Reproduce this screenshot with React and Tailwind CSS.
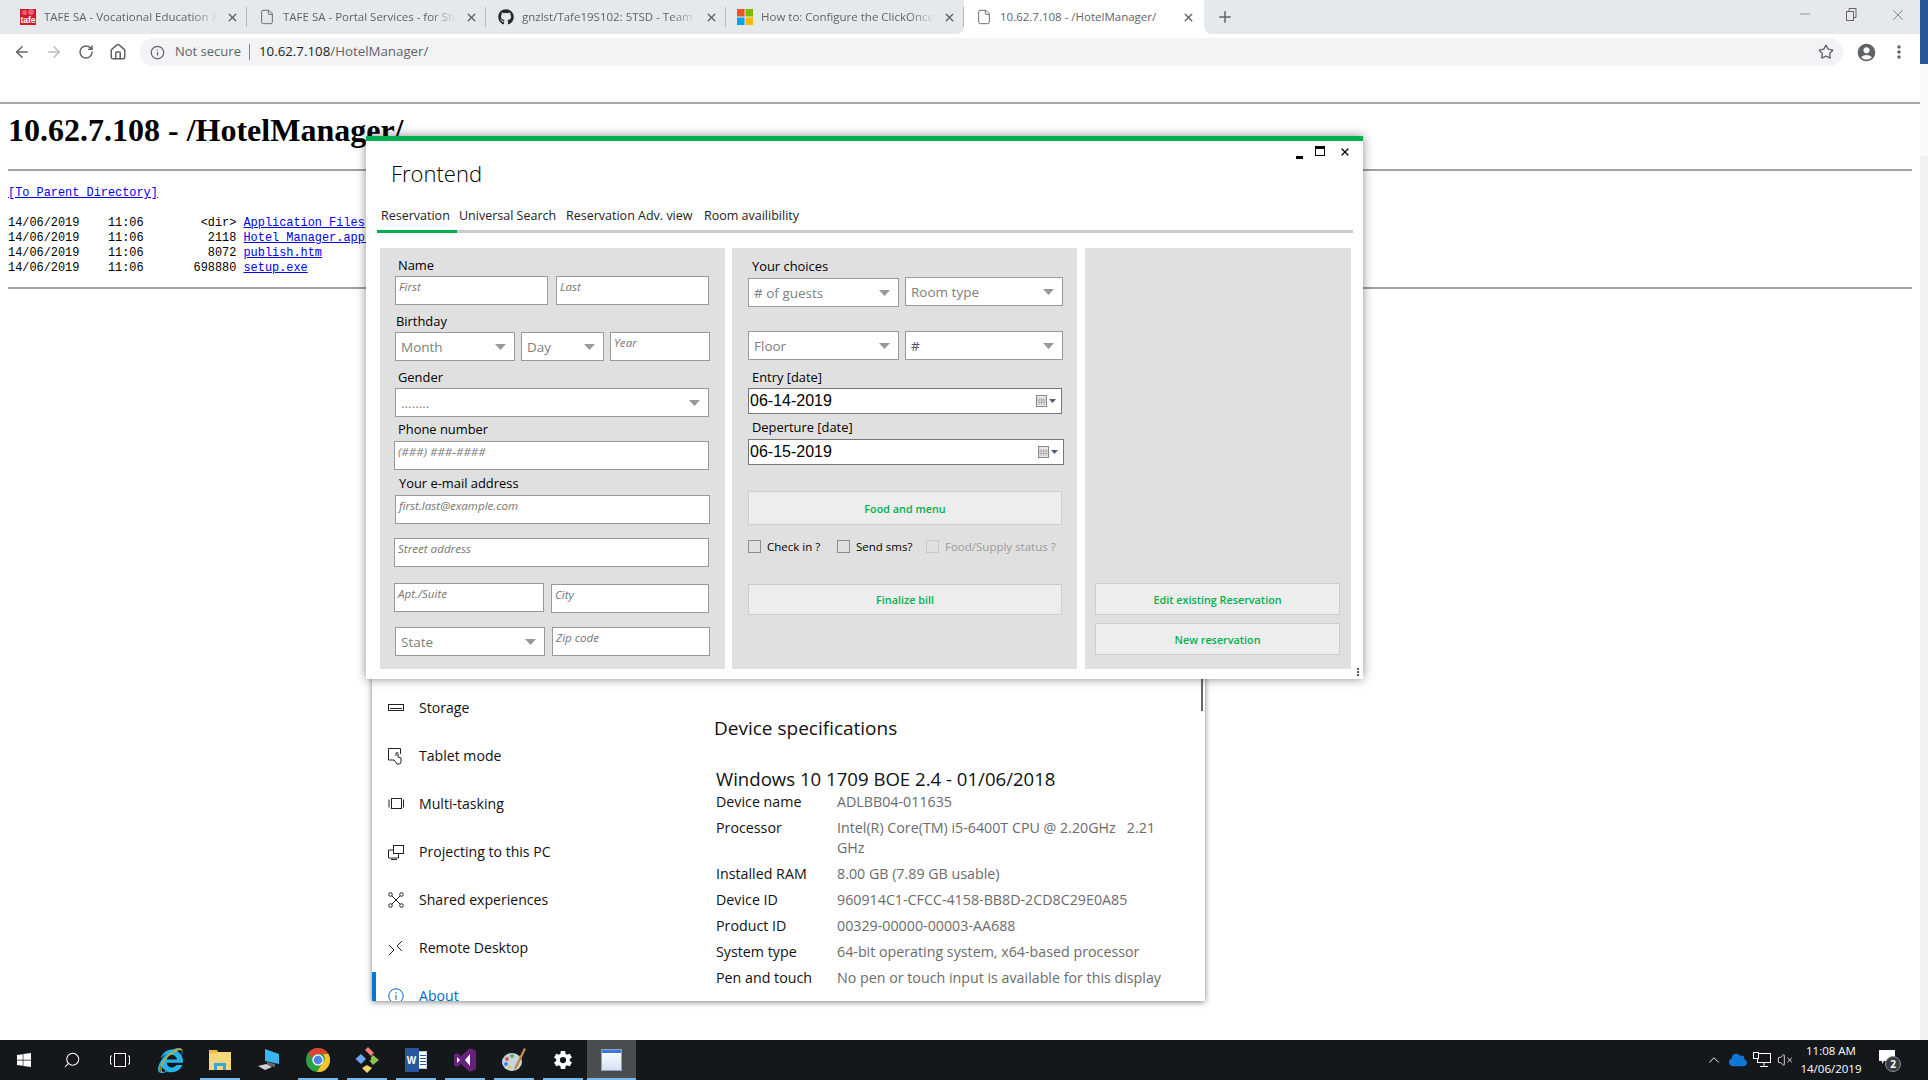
import React from "react";
import {
  ArrowLeft,
  ArrowRight,
  RotateCw,
  Home,
  Info,
  Star,
  X,
  Plus,
  Minus,
  File,
  Search,
  ChevronUp,
  VolumeX,
} from "lucide-react";
import { FaGithub, FaWindows, FaCloud, FaInternetExplorer } from "react-icons/fa";
import { IoSettingsSharp } from "react-icons/io5";
import { MdAccountCircle, MdMoreVert } from "react-icons/md";

const SEGOE = "font-['Open_Sans',sans-serif]";

const TafeIcon = () => (
  <div className="relative w-4 h-4 bg-[#d3182c] flex items-end justify-center overflow-hidden">
    <div className="absolute left-[2px] top-[1px] w-[5px] h-[5px] rounded-full bg-[#e8606e]" />
    <div className="absolute right-[2px] top-0 w-[6px] h-[6px] rounded-full bg-[#e8606e]" />
    <span className="relative text-white text-[8.5px] font-bold leading-[9px] font-['Liberation_Sans',sans-serif]">tafe</span>
  </div>
);

const MsIcon = () => (
  <svg width="16" height="16" viewBox="0 0 16 16">
    <rect width="7.5" height="7.5" fill="#f25022" />
    <rect x="8.5" width="7.5" height="7.5" fill="#7fba00" />
    <rect y="8.5" width="7.5" height="7.5" fill="#00a4ef" />
    <rect x="8.5" y="8.5" width="7.5" height="7.5" fill="#ffb900" />
  </svg>
);

const tabs = [
  { title: "TAFE SA - Vocational Education & Training", icon: <TafeIcon />, width: "w-[247px] pl-5" },
  { title: "TAFE SA - Portal Services - for Students", icon: <File size={16} strokeWidth={1.4} color="#5f6368" />, width: "w-[239px] pl-3" },
  { title: "gnzlst/Tafe19S102: 5TSD - Team Project", icon: <FaGithub size={16} color="#24292e" />, width: "w-[240px] pl-3" },
  { title: "How to: Configure the ClickOnce Trust", icon: <MsIcon />, width: "w-[238px] pl-[11px]" },
];

const Tab = ({ title, icon, width }) => (
  <div className={`${width} h-5 my-[7px] pr-[7px] flex items-center gap-2 border-r border-[#b5b9bd]`}>
    <div className="shrink-0">{icon}</div>
    <div className="flex-1 min-w-0 overflow-hidden whitespace-nowrap text-[11.5px] text-[#5f6368] [mask-image:linear-gradient(to_right,black_85%,transparent)]">
      {title}
    </div>
    <X size={13} strokeWidth={2.6} color="#5f6368" className="shrink-0" />
  </div>
);

const TabStrip = () => (
  <div className={`h-[34px] flex bg-white ${SEGOE}`}>
    <div className="w-[964px] h-full bg-[#e6e9ec] rounded-br-lg flex">
      {tabs.map((t) => (
        <Tab key={t.title} {...t} />
      ))}
    </div>
    <div className="w-[240px] h-full bg-white rounded-t-lg pl-3 pr-[9px] flex items-center gap-2">
      <File size={16} strokeWidth={1.4} color="#5f6368" className="shrink-0" />
      <div className="flex-1 whitespace-nowrap text-[11.5px] text-[#5f6368]">10.62.7.108 - /HotelManager/</div>
      <X size={13} strokeWidth={2.6} color="#5f6368" className="shrink-0" />
    </div>
    <div className="flex-1 h-full bg-[#e6e9ec] rounded-bl-lg flex items-center pl-3">
      <Plus size={18} strokeWidth={2} color="#5f6368" />
      <div className="flex-1" />
      <div className="flex items-start h-full pt-[6px] gap-[30px] pr-[13px] text-[#666]">
        <Minus size={16} strokeWidth={1} />
        <svg width="16" height="16" viewBox="0 0 16 16" fill="none" stroke="currentColor">
          <rect x="3.5" y="5.5" width="7" height="9" />
          <path d="M6 5V2.5h7v9h-2.5" />
        </svg>
        <X size={18} strokeWidth={1} />
      </div>
    </div>
  </div>
);

const Toolbar = () => (
  <div className={`h-8 flex items-start pt-1 pl-[6px] ${SEGOE}`}>
    <div className="w-8 h-7 flex items-center justify-center"><ArrowLeft size={18} color="#5f6368" strokeWidth={2} /></div>
    <div className="w-8 h-7 flex items-center justify-center"><ArrowRight size={18} color="#b9bcc0" strokeWidth={2} /></div>
    <div className="w-8 h-7 flex items-center justify-center"><RotateCw size={16} color="#5f6368" strokeWidth={2.2} /></div>
    <div className="w-8 h-7 flex items-center justify-center"><Home size={18} color="#5f6368" strokeWidth={2} /></div>
    <div className="ml-[6px] w-[1703px] h-7 rounded-full bg-[#f1f3f4] flex items-center pl-[10px] pr-[9px]">
      <Info size={15} color="#5f6368" strokeWidth={2} />
      <span className="ml-[10px] text-[13px] text-[#5f6368]">Not secure</span>
      <div className="ml-2 w-px h-4 bg-[#80868b]" />
      <span className="ml-[9px] text-[13.3px] text-[#202124]">10.62.7.108<span className="text-[#5f6368]">/HotelManager/</span></span>
      <div className="flex-1" />
      <Star size={16} color="#5f6368" strokeWidth={2} />
    </div>
    <div className="ml-[7px] w-8 h-7 flex items-center justify-center"><MdAccountCircle size={21} color="#5f6368" /></div>
    <div className="ml-px w-8 h-7 flex items-center justify-center"><MdMoreVert size={20} color="#5f6368" /></div>
  </div>
);

const files = [
  ["14/06/2019    11:06        <dir> ", "Application Files"],
  ["14/06/2019    11:06         2118 ", "Hotel_Manager.application"],
  ["14/06/2019    11:06         8072 ", "publish.htm"],
  ["14/06/2019    11:06       698880 ", "setup.exe"],
];

const Listing = () => (
  <div className="pt-9 font-['Liberation_Mono',monospace] text-[11.9px] text-black">
    <div className="h-0.5 bg-[#a8a8a8]" />
    <h1 className="mt-[8px] ml-2 h-9 text-[32px] leading-9 font-bold whitespace-nowrap font-['Liberation_Serif',serif]">
      10.62.7.108 - /HotelManager/
    </h1>
    <div className="mt-[21px] mx-2 h-0.5 bg-[#a0a0a0]" />
    <div className="mt-[15px] ml-2 leading-[15px] text-[#0000ee] underline">[To Parent Directory]</div>
    <pre className="mt-[15px] ml-2 leading-[15px] font-['Liberation_Mono',monospace]">
      {files.map(([meta, name]) => (
        <div key={name}>
          {meta}
          <span className="text-[#0000ee] underline">{name}</span>
        </div>
      ))}
    </pre>
    <div className="mt-[11px] mx-2 h-0.5 bg-[#a0a0a0]" />
  </div>
);

const Caret = () => (
  <svg width="11" height="6" viewBox="0 0 11 6" className="shrink-0">
    <path d="M0 0h11L5.5 6z" fill="#999" />
  </svg>
);

const Field = ({ className = "", text }) => (
  <div className={`h-[29px] border border-[#999] bg-white pl-[3px] text-[11.6px] leading-[20px] italic text-[#777] ${className}`}>
    {text}
  </div>
);

const Select = ({ className = "", text, dark }) => (
  <div className={`h-[29px] border border-[#999] bg-white pl-[5px] pr-2 flex items-center justify-between text-[13.5px] text-[#808080] ${className}`}>
    <span className={`pt-px ${dark ? "text-[#555]" : ""}`}>{text}</span>
    <Caret />
  </div>
);

const Label = ({ className = "", text }) => (
  <div className={`h-4 text-[12.9px] leading-[17px] text-black whitespace-nowrap ${className}`}>{text}</div>
);

const DateBox = ({ className = "", value }) => (
  <div className={`h-[26px] border border-[#777] bg-white pl-[1px] pr-1 flex items-center justify-between text-[16px] text-black font-['Liberation_Sans',sans-serif] ${className}`}>
    <span>{value}</span>
    <svg width="21" height="13" viewBox="0 0 21 13">
      <rect x="0.5" y="0.5" width="10" height="11" fill="#e8e8e8" stroke="#8a8a8a" />
      <path d="M3 3v7M5.5 3v7M8 3v7M1 5h9M1 7.5h9" stroke="#b0b0b0" />
      <path d="M13 4h7l-3.5 4z" fill="#4a5f80" />
    </svg>
  </div>
);

const GreenButton = ({ className = "", text }) => (
  <div className={`border border-[#cdcdcd] bg-[#ededed] pt-[2px] flex items-center justify-center text-[10.8px] font-semibold text-[#00b050] ${className}`}>
    {text}
  </div>
);

const Check = ({ text, className = "", off }) => (
  <div className={`flex items-center gap-[6px] ${className}`}>
    <div className={`w-[13px] h-[13px] border ${off ? "border-[#c8c8c8]" : "border-[#8e8e8e]"}`} />
    <span className={`text-[11.5px] leading-none whitespace-nowrap ${off ? "text-[#9b9b9b]" : "text-black"}`}>{text}</span>
  </div>
);

const GuestPanel = () => (
  <div className="w-[345px] h-[421px] bg-[#e0e0e0] pl-[15px] pt-[9px]">
    <Label className="ml-[3px]" text="Name" />
    <div className="mt-[3px] flex gap-2">
      <Field className="w-[153px]" text="First" />
      <Field className="w-[153px]" text="Last" />
    </div>
    <Label className="mt-2 ml-px" text="Birthday" />
    <div className="mt-[3px] flex gap-[6px]">
      <Select className="w-[120px]" text="Month" />
      <Select className="w-[83px]" text="Day" />
      <Field className="w-[100px]" text="Year" />
    </div>
    <Label className="mt-2 ml-[3px]" text="Gender" />
    <Select className="mt-[3px] w-[314px]" text="........" />
    <Label className="mt-1 ml-[3px]" text="Phone number" />
    <Field className="mt-1 -ml-px w-[315px]" text="(###) ###-####" />
    <Label className="mt-[5px] ml-1" text="Your e-mail address" />
    <Field className="mt-1 w-[315px]" text="first.last@example.com" />
    <Field className="mt-[14px] -ml-px w-[315px]" text="Street address" />
    <div className="mt-4 -ml-px flex items-start gap-[7px]">
      <Field className="w-[150px]" text="Apt./Suite" />
      <Field className="mt-px w-[158px]" text="City" />
    </div>
    <div className="mt-[14px] flex gap-[7px]">
      <Select className="w-[150px]" text="State" />
      <Field className="w-[158px]" text="Zip code" />
    </div>
  </div>
);

const ChoicesPanel = () => (
  <div className="w-[345px] h-[421px] bg-[#e0e0e0] pl-4 pt-[10px]">
    <Label className="ml-1" text="Your choices" />
    <div className="mt-[3px] flex items-start gap-[6px]">
      <Select className="mt-px w-[151px]" text="# of guests" />
      <Select className="w-[158px]" text="Room type" />
    </div>
    <div className="mt-6 flex gap-[6px]">
      <Select className="w-[151px]" text="Floor" />
      <Select className="w-[158px]" text="#" dark />
    </div>
    <Label className="mt-[9px] ml-1" text="Entry [date]" />
    <DateBox className="mt-[3px] w-[314px]" value="06-14-2019" />
    <Label className="mt-[5px] ml-1" text="Deperture [date]" />
    <DateBox className="mt-1 w-[316px]" value="06-15-2019" />
    <GreenButton className="mt-[26px] w-[314px] h-[34px]" text="Food and menu" />
    <div className="mt-[15px] h-[13px] flex">
      <Check className="w-[89px]" text="Check in ?" />
      <Check className="w-[89px]" text="Send sms?" />
      <Check text="Food/Supply status ?" off />
    </div>
    <GreenButton className="mt-[31px] w-[314px] h-[31px]" text="Finalize bill" />
  </div>
);

const ActionsPanel = () => (
  <div className="ml-px w-[266px] h-[421px] bg-[#e0e0e0] pl-[10px] pr-[11px] pb-[14px] flex flex-col justify-end gap-2">
    <GreenButton className="h-8" text="Edit existing Reservation" />
    <GreenButton className="h-8" text="New reservation" />
  </div>
);

const Frontend = () => (
  <div className={`absolute left-[366px] top-[136px] w-[997px] h-[543px] bg-white shadow-[0_0_10px_rgba(0,0,0,0.45)] ${SEGOE}`}>
    <div className="h-[5px] bg-[#00b050]" />
    <div className="h-[62px] flex justify-between pl-[25px] pr-3">
      <div className="pt-4 text-[22px] leading-8 font-light text-black">Frontend</div>
      <div className="flex items-start pt-[5px] gap-[14px]">
        <div className="mt-[10px] -mr-[2px] w-[7px] h-[3px] bg-black" />
        <div className="w-[10px] h-[10px] border border-black border-t-[3px]" />
        <X size={12} strokeWidth={2.4} color="#000" />
      </div>
    </div>
    <div className="h-[27px] flex items-center ml-[11px] text-[12.5px] text-[#222]">
      <div className="w-20 pl-1">Reservation</div>
      <div className="w-[109px] pl-[2px] whitespace-nowrap">Universal Search</div>
      <div className="w-[138px] whitespace-nowrap">Reservation Adv. view</div>
      <div className="whitespace-nowrap">Room availibility</div>
    </div>
    <div className="ml-[11px] mr-[10px] h-[3px] bg-[#cccccc]">
      <div className="w-20 h-full bg-[#00b050]" />
    </div>
    <div className="mt-[15px] ml-[14px] flex gap-[7px]">
      <GuestPanel />
      <ChoicesPanel />
      <ActionsPanel />
    </div>
    <div className="absolute right-[4px] bottom-[3px] flex flex-col gap-[1px]">
      <div className="w-[2px] h-[2px] bg-[#555]" />
      <div className="w-[2px] h-[2px] bg-[#555]" />
      <div className="w-[2px] h-[2px] bg-[#555]" />
    </div>
  </div>
);

const stroke = { fill: "none", stroke: "#222", strokeWidth: 1 };

const navItems = [
  { label: "Storage", icon: <svg width="16" height="16" viewBox="0 0 16 16" {...stroke}><rect x="0.5" y="4.5" width="15" height="6" /><path d="M2 8.5h12" /></svg> },
  { label: "Tablet mode", icon: <svg width="16" height="18" viewBox="0 0 16 18" {...stroke}><path d="M6 13H.5V1.5h12V7" /><path d="M8 9V6.5a1 1 0 0 1 2 0V10l3 1v4a2 2 0 0 1-2 2H9l-3-4" /></svg> },
  { label: "Multi-tasking", icon: <svg width="16" height="16" viewBox="0 0 16 16" {...stroke}><rect x="3.5" y="2.5" width="10" height="10" /><path d="M1 3.5v8M15.5 3.5v8" /></svg> },
  { label: "Projecting to this PC", icon: <svg width="16" height="16" viewBox="0 0 16 16" {...stroke}><rect x="5.5" y="1.5" width="10" height="8" /><path d="M5 6H.5v8h10V10M3 15.5h6" /></svg> },
  { label: "Shared experiences", icon: <svg width="16" height="16" viewBox="0 0 16 16" {...stroke}><path d="M3 3l10 10M13 3L3 13" /><circle cx="2.5" cy="2.5" r="1.8" fill="#fff" /><circle cx="13.5" cy="2.5" r="1.8" fill="#fff" /><circle cx="2.5" cy="13.5" r="1.8" fill="#fff" /><circle cx="13.5" cy="13.5" r="1.8" fill="#fff" /></svg> },
  { label: "Remote Desktop", icon: <svg width="16" height="16" viewBox="0 0 16 16" {...stroke}><path d="M1 5l5 5-5 5M14 1L9 6l5 5" /></svg> },
];

const specs = [
  ["Device name", "ADLBB04-011635", "h-[26px]"],
  ["Processor", "Intel(R) Core(TM) i5-6400T CPU @ 2.20GHz \u00a0 2.21 GHz", "h-[46px]"],
  ["Installed RAM", "8.00 GB (7.89 GB usable)", "h-[26px]"],
  ["Device ID", "960914C1-CFCC-4158-BB8D-2CD8C29E0A85", "h-[26px]"],
  ["Product ID", "00329-00000-00003-AA688", "h-[26px]"],
  ["System type", "64-bit operating system, x64-based processor", "h-[26px]"],
  ["Pen and touch", "No pen or touch input is available for this display", "h-[26px]"],
];

const Settings = () => (
  <div className={`absolute left-[372px] top-[660px] w-[833px] h-[341px] bg-white shadow-[0_1px_6px_rgba(0,0,0,0.5)] overflow-hidden flex ${SEGOE}`}>
    <div className="w-[343px] pt-6">
      {navItems.map((n) => (
        <div key={n.label} className="h-12 pl-4 flex items-center gap-[15px] text-[14.1px] leading-[18px] text-[#111] whitespace-nowrap">
          <div className="w-4 flex justify-center">{n.icon}</div>
          {n.label}
        </div>
      ))}
      <div className="relative h-12 pl-4 flex items-center gap-[15px] text-[14.1px] leading-[18px] text-[#0067c0]">
        <div className="absolute left-0 top-0 w-1 h-12 bg-[#0078d7]" />
        <div className="w-4 flex justify-center">
          <svg width="16" height="16" viewBox="0 0 16 16" fill="none" stroke="#0067c0"><circle cx="8" cy="8" r="7.2" /><path d="M8 7v5M8 4v1.5" /></svg>
        </div>
        About
      </div>
    </div>
    <div className="flex-1 pt-[54px] text-[#111]">
      <div className="h-7 -ml-px text-[19px] leading-7 whitespace-nowrap">Device specifications</div>
      <div className="mt-[23px] ml-px h-7 text-[18.6px] leading-7 whitespace-nowrap">Windows 10 1709 BOE 2.4 - 01/06/2018</div>
      <div className="-mt-px ml-px text-[14.25px] leading-5">
        {specs.map(([k, v, h]) => (
          <div key={k} className={`flex ${h}`}>
            <div className="w-[121px] shrink-0">{k}</div>
            <div className="w-[335px] text-[#6b6b6b]">{v}</div>
          </div>
        ))}
      </div>
    </div>
    <div className="absolute left-[829px] top-0 w-[2px] h-[51px] bg-[#666]" />
  </div>
);

const Chrome = () => (
  <svg width="24" height="24" viewBox="0 0 24 24">
    <circle cx="12" cy="12" r="12" fill="#2f9e44" />
    <path d="M12 0a12 12 0 0 1 10.4 6H12a6 6 0 0 0-5.7 4.2L2.4 4.8A12 12 0 0 1 12 0z" fill="#e0402f" />
    <path d="M22.4 6A12 12 0 0 1 11 24l5-8.5A6 6 0 0 0 17 6z" fill="#f8c32c" />
    <circle cx="12" cy="12" r="5.7" fill="#fff" />
    <circle cx="12" cy="12" r="4.4" fill="#4a86e8" />
  </svg>
);

const taskIcons = [
  {
    node: (
      <div className="relative">
        <FaInternetExplorer size={25} color="#27b4e9" />
        <svg width="26" height="26" viewBox="0 0 26 26" className="absolute left-0 top-0" fill="none">
          <path d="M4 24c-3-2 1-12 7-17 5-4 11-7 13-5" stroke="#d9a514" strokeWidth="1.4" />
        </svg>
      </div>
    ),
  },
  {
    bar: true,
    node: (
      <svg width="24" height="22" viewBox="0 0 24 22">
        <path d="M1 1h8l1 2h13v18H1z" fill="#f6d77a" />
        <path d="M1 1h8v3H1z" fill="#e9b949" />
        <path d="M6 21v-7h12v7h-3v-4H9v4z" fill="#3aa6e0" />
      </svg>
    ),
  },
  {
    node: (
      <svg width="24" height="24" viewBox="0 0 24 24">
        <path d="M8 1l14 5v10L8 13z" fill="#3cb4f2" />
        <path d="M10 14l8 2v3l-8-2z" fill="#6a6a6a" />
        <path d="M1 18l8-2 6 3-7 3z" fill="#d0d0d0" />
      </svg>
    ),
  },
  { bar: true, node: <Chrome /> },
  {
    bar: true,
    node: (
      <svg width="24" height="26" viewBox="0 0 24 26">
        <path d="M6 7l5 5-5 5-5.500-5z" fill="#6ea6f2" />
        <path d="M13 0l6 6-3 3-6-6z" fill="#ef7d7d" />
        <path d="M18 8l6 5-6 5-4-5z" fill="#8cc152" />
        <path d="M12 18l5 3-5 5-5-5z" fill="#f6d365" />
        <path d="M12 6v11M12 13l4-1" stroke="#111" strokeWidth="2" />
      </svg>
    ),
  },
  {
    bar: true,
    node: (
      <div className="relative w-[22px] h-6">
        <div className="absolute left-[8px] top-[3px] w-[14px] h-[18px] bg-white border border-[#b8c9e4] flex flex-col justify-center gap-[2px] pl-[6px]">
          <div className="h-px bg-[#2b579a]" />
          <div className="h-px bg-[#2b579a]" />
          <div className="h-px bg-[#2b579a]" />
          <div className="h-px bg-[#2b579a]" />
        </div>
        <div className="absolute left-0 top-0 w-[14px] h-6 bg-[#2b579a] flex items-center justify-center text-white text-[10px] font-bold font-['Liberation_Sans',sans-serif]">W</div>
      </div>
    ),
  },
  {
    bar: true,
    node: (
      <svg width="22" height="24" viewBox="0 0 22 24">
        <path d="M16 0l6 3v18l-6 3-9-8-4 3-3-1.500V6.500L3 5l4 3z" fill="#68217a" />
        <path d="M16 6l-5 6 5 6zM3 9v6l3-3z" fill="#fff" />
      </svg>
    ),
  },
  {
    bar: true,
    node: (
      <svg width="26" height="26" viewBox="0 0 26 26">
        <ellipse cx="11" cy="15" rx="10" ry="9" fill="#c9d6e2" />
        <circle cx="6" cy="12" r="2" fill="#e2574c" />
        <circle cx="11" cy="9" r="2" fill="#5ab55e" />
        <circle cx="5" cy="17" r="2" fill="#3b8ad9" />
        <circle cx="9" cy="20" r="1.800" fill="#e6c33f" />
        <path d="M23 1l2 1-9 19-3 2 1-4z" fill="#c58a4a" />
      </svg>
    ),
  },
  { bar: true, node: <IoSettingsSharp size={20} color="#fff" /> },
  {
    bar: true,
    active: true,
    node: (
      <div className="w-[21px] h-[22px] border border-[#8aa4c8] bg-gradient-to-b from-[#fff] to-[#d5e1f2]">
        <div className="h-[3px] bg-[#3f78d8]" />
      </div>
    ),
  },
];

const Taskbar = () => (
  <div className={`h-10 bg-[#14181b] flex items-center text-white ${SEGOE}`}>
    <div className="w-12 h-full flex items-center justify-center"><FaWindows size={16} /></div>
    <div className="w-12 h-full flex items-center justify-center"><Search size={18} strokeWidth={1.4} className="-scale-x-100" /></div>
    <div className="w-12 h-full flex items-center justify-center">
      <svg width="20" height="16" viewBox="0 0 20 16" fill="none" stroke="#fff">
        <rect x="4.500" y="1.500" width="11" height="13" />
        <path d="M2 4H.5v8H2M18 4h1.500v8H18" />
      </svg>
    </div>
    <div className="ml-[2px] flex h-full">
      {taskIcons.map((t, i) => (
        <div key={i} className={`relative w-[49px] h-full flex items-center justify-center ${t.active ? "bg-[#4a4d4f]" : ""}`}>
          {t.node}
          {t.bar && <div className={`absolute bottom-0 h-[2px] bg-[#76b9ed] ${t.active ? "left-0 right-0" : "left-[5px] right-1"}`} />}
        </div>
      ))}
    </div>
    <div className="flex-1" />
    <ChevronUp size={18} strokeWidth={1.2} />
    <FaCloud size={18} color="#0f78d4" className="ml-[6px]" />
    <svg width="18" height="16" viewBox="0 0 18 16" fill="none" stroke="#fff" className="ml-[6px]">
      <rect x="4.500" y="1.500" width="13" height="9" />
      <path d="M11 11v3M7 14.500h8" />
      <rect x="0.500" y="0.500" width="5" height="6" fill="#14181b" />
    </svg>
    <VolumeX size={16} strokeWidth={1.2} className="ml-[6px]" />
    <div className="ml-[5px] w-[66px] text-center text-[11.5px] leading-[18px] whitespace-nowrap">
      <div>11:08 AM</div>
      <div>14/06/2019</div>
    </div>
    <div className="relative ml-[15px] w-5 h-6 mr-[29px]">
      <svg width="18" height="16" viewBox="0 0 18 16" className="absolute left-0 top-[2px]">
        <path d="M0 0h16v11H5l-2 3v-3H0z" fill="#fff" />
      </svg>
      <div className="absolute left-[6px] top-[8px] w-4 h-4 rounded-full bg-[#3a3d40] border border-[#8a8d90] text-[10px] leading-[14px] text-center font-bold">2</div>
    </div>
  </div>
);

const Scrollbar = () => (
  <div className="w-2 h-full flex flex-col">
    <div className="h-16 bg-[#2b579a]" />
    <div className="h-[92px] bg-[#fafafa]" />
    <div className="flex-1 bg-[#f1f1f1]" />
  </div>
);

export default function App() {
  return (
    <div className="relative w-[1928px] h-[1080px] overflow-hidden bg-white flex flex-col">
      <div className="flex-1 min-h-0 flex">
        <div className="w-[1920px] flex flex-col">
          <TabStrip />
          <Toolbar />
          <Listing />
        </div>
        <Scrollbar />
      </div>
      <Taskbar />
      <Settings />
      <Frontend />
    </div>
  );
}
